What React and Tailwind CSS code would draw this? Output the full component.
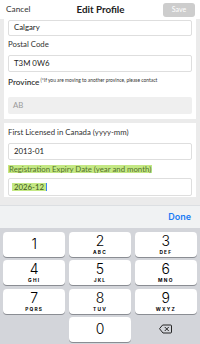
import React from "react";

const keys = [
  ["1", ""],
  ["2", "ABC"],
  ["3", "DEF"],
  ["4", "GHI"],
  ["5", "JKL"],
  ["6", "MNO"],
  ["7", "PQRS"],
  ["8", "TUV"],
  ["9", "WXYZ"],
];

function Key({ d, l }) {
  return (
    <div className="flex-1 h-[25px] bg-white rounded-[4px] shadow-[0_1px_0_#8a8d93] flex flex-col items-center justify-center leading-none">
      <span className="text-[14px] text-black font-['Inter',sans-serif] font-light leading-none" style={{ marginTop: l ? 0 : -1 }}>{d}</span>
      {l ? (
        <span className="text-[4.8px] font-bold tracking-[1.2px] text-black font-['Inter',sans-serif] leading-none mt-[2px]">{l}</span>
      ) : null}
    </div>
  );
}

export default function App() {
  return (
    <div className="w-[200px] h-[344px] overflow-hidden flex flex-col bg-[#ebebeb] font-['Lato',sans-serif] text-[#222]">
      <div className="h-[19px] shrink-0 bg-white flex items-center justify-between pl-[6px] pr-[5px]">
        <span className="text-[8.3px] text-[#333] w-[40px]">Cancel</span>
        <span className="text-[9.8px] font-bold text-[#222]">Edit Profile</span>
        <div className="w-[32px] h-[14px] rounded-[3px] bg-[#cdcdcd] flex items-center justify-center text-[7px] text-white ml-[8px]">Save</div>
      </div>
      <div className="flex-1 overflow-hidden flex flex-col gap-[4px] px-[4px]">
        <div className="bg-white px-[4px] pt-[1px] pb-[5px] shrink-0">
          <div className="h-[16px] border border-[#dedede] rounded-[2px] flex items-center pl-[5px] text-[7.8px]">Calgary</div>
          <div className="h-[19px] flex items-end pb-[4px] text-[7.8px] text-[#333]">Postal Code</div>
          <div className="h-[17px] border border-[#dedede] rounded-[2px] flex items-center pl-[5px] text-[7.8px]">T3M 0W6</div>
          <div className="h-[25px] flex items-start pt-[6px] whitespace-nowrap overflow-hidden">
            <span className="text-[8.2px] font-semibold text-[#333] leading-none">Province</span>
            <span className="text-[4.9px] text-[#333] leading-none ml-[1px]">(*If you are moving to another province, please contact</span>
          </div>
          <div className="h-[17px] bg-[#efefef] rounded-[2px] flex items-center pl-[5px] text-[7.8px] text-[#9a9a9a]">AB</div>
        </div>
        <div className="bg-white px-[4px] pt-[0px] pb-[1px] shrink-0">
          <div className="h-[20px] flex items-end pb-[4px] text-[7.8px] text-[#333]">First Licensed in Canada (yyyy-mm)</div>
          <div className="h-[17px] border border-[#dedede] rounded-[2px] flex items-center pl-[5px] text-[7.8px]">2013-01</div>
          <div className="h-[18px] flex items-center">
            <span className="text-[7.8px] leading-[8px] bg-[#c4e884] text-[#52722a] px-[1px]">Registration Expiry Date (year and month)</span>
          </div>
          <div className="h-[18px] border border-[#dedede] rounded-[2px] flex items-center pl-[3px] text-[7.8px]">
            <span className="bg-[#c4e884] px-[2px] leading-[8px] text-[#3e5a1d]">2026-12</span>
            <span className="w-[1px] h-[8px] bg-[#3b82f6]"></span>
          </div>
        </div>
      </div>
      <div className="h-[23px] shrink-0 bg-[#f0f2f3] border-t border-[#dcdfe2] flex items-center justify-end pr-[9px]">
        <span className="text-[9px] font-semibold text-[#1a7cf5] font-['Inter',sans-serif]">Done</span>
      </div>
      <div className="h-[116px] shrink-0 bg-[#d3d5da] px-[3px] pt-[4px] flex flex-col gap-[3.3px]">
        {[0, 1, 2].map((r) => (
          <div key={r} className="flex gap-[3.5px]">
            {keys.slice(r * 3, r * 3 + 3).map(([d, l]) => (
              <Key key={d} d={d} l={l} />
            ))}
          </div>
        ))}
        <div className="flex gap-[3.5px]">
          <div className="flex-1 h-[25px]"></div>
          <div className="flex-1 h-[25px] bg-white rounded-[4px] shadow-[0_1px_0_#8a8d93] flex items-center justify-center">
            <span className="text-[14px] text-black font-['Inter',sans-serif] font-light leading-none">0</span>
          </div>
          <div className="flex-1 h-[25px] flex items-center justify-center">
            <svg width="13" height="10" viewBox="0 0 26 20" fill="none" stroke="#111" strokeWidth="1.8" strokeLinejoin="round" strokeLinecap="round">
              <path d="M8 2 H23 a2 2 0 0 1 2 2 V16 a2 2 0 0 1 -2 2 H8 L1.5 10 Z" />
              <path d="M12 6.5 L19 13.5 M19 6.5 L12 13.5" />
            </svg>
          </div>
        </div>
      </div>
    </div>
  );
}
